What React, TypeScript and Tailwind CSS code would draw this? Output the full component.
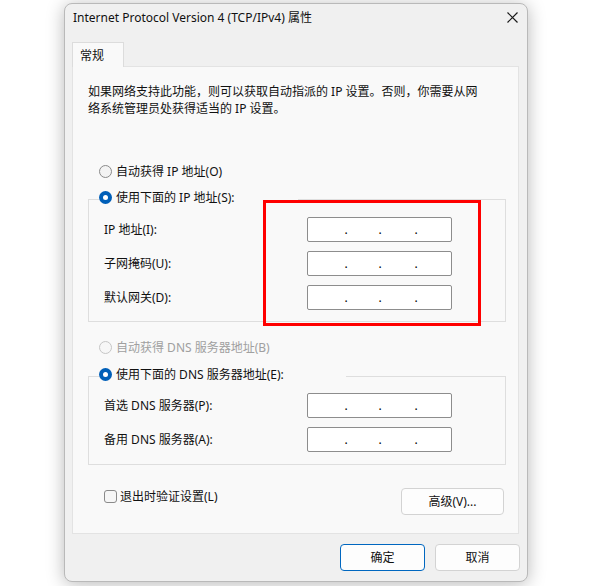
import React from "react";

const Radio = ({ checked, disabled }: { checked?: boolean; disabled?: boolean }) =>
  checked ? (
    <span className="flex h-[13px] w-[13px] shrink-0 items-center justify-center rounded-full bg-[#005fb8]">
      <span className="h-[5px] w-[5px] rounded-full bg-white" />
    </span>
  ) : disabled ? (
    <span className="h-[13px] w-[13px] shrink-0 rounded-full border border-[#c6c6c6] bg-[#f7f7f7]" />
  ) : (
    <span className="h-[13px] w-[13px] shrink-0 rounded-full border border-[#8a8a8a] bg-[#f3f3f3]" />
  );

const IpField = () => (
  <div className="flex h-[25px] w-[145px] items-center rounded-[2px] border border-[#8d8d8d] bg-white leading-[17px] text-black">
    <span className="w-[36px]" />
    <span className="w-[4px] text-center">.</span>
    <span className="w-[30px]" />
    <span className="w-[4px] text-center">.</span>
    <span className="w-[32px]" />
    <span className="w-[4px] text-center">.</span>
  </div>
);

const FieldRow = ({ label }: { label: string }) => (
  <div className="flex h-[25px] items-center">
    <span className="w-[203px]">{label}</span>
    <IpField />
  </div>
);

export default function App() {
  return (
    <div className="h-[586px] w-[600px] overflow-hidden bg-white pl-[64px] pt-[3px] font-['Noto_Sans','Noto_Sans_CJK_SC',sans-serif] text-[12px] leading-[17px] text-[#111111]">
      <div className="flex h-[579px] w-[464px] flex-col rounded-[8px] border border-[#b9b9b9] bg-[#f0f0f0] shadow-[0_2px_18px_rgba(0,0,0,0.28)]">
        {/* title bar */}
        <div className="flex h-[26px] items-center justify-between pl-[8px] pr-[9px]">
          <span>Internet Protocol Version 4 (TCP/IPv4) 属性</span>
          <svg width="11" height="11" viewBox="0 0 11 11" className="text-[#1a1a1a]">
            <path d="M0.5 0.5L10.5 10.5M10.5 0.5L0.5 10.5" stroke="currentColor" strokeWidth="1.2" fill="none" />
          </svg>
        </div>

        {/* tab header */}
        <div className="ml-[7px] mt-[12px] flex">
          <div className="relative z-10 -mb-px h-[25px] w-[52px] border-l border-r border-t border-[#dcdcdc] bg-[#f9f9f9] pl-[7px] pt-[4px]">
            常规
          </div>
        </div>

        {/* tab page */}
        <div className="relative ml-[7px] h-[468px] w-[447px] border border-[#e3e3e3] bg-[#f9f9f9] pl-[15px] pt-[16px]">
          <p className="leading-[17px]">
            如果网络支持此功能，则可以获取自动指派的 IP 设置。否则，你需要从网
            <br />
            络系统管理员处获得适当的 IP 设置。
          </p>

          <div className="ml-[11px] mt-[46px] flex h-[17px] items-center gap-[4px]">
            <Radio />
            <span>自动获得 IP 地址(O)</span>
          </div>

          <fieldset className="mt-[9px] w-[418px] border border-[#dedede] pb-[11px]">
            <legend className="ml-[10px] w-[199px] pb-[4px]">
              <div className="flex h-[17px] items-center gap-[4px]">
                <Radio checked />
                <span>使用下面的 IP 地址(S):</span>
              </div>
            </legend>
            <div className="flex flex-col gap-[9px] pl-[15px] pt-[7px]">
              <FieldRow label="IP 地址(I):" />
              <FieldRow label="子网掩码(U):" />
              <FieldRow label="默认网关(D):" />
            </div>
          </fieldset>

          <div className="ml-[11px] mt-[17px] flex h-[17px] items-center gap-[4px] text-[#a0a0a0]">
            <Radio disabled />
            <span>自动获得 DNS 服务器地址(B)</span>
          </div>

          <fieldset className="mt-[10px] w-[418px] border border-[#dedede] pb-[12px]">
            <legend className="ml-[10px] w-[247px] pb-[4px]">
              <div className="flex h-[17px] items-center gap-[4px]">
                <Radio checked />
                <span>使用下面的 DNS 服务器地址(E):</span>
              </div>
            </legend>
            <div className="flex flex-col gap-[9px] pl-[15px] pt-[6px]">
              <FieldRow label="首选 DNS 服务器(P):" />
              <FieldRow label="备用 DNS 服务器(A):" />
            </div>
          </fieldset>

          <div className="mt-[23px] flex w-[416px] items-start">
            <label className="ml-[16px] flex h-[17px] items-center gap-[3px]">
              <span className="h-[13px] w-[13px] rounded-[3px] border border-[#8a8a8a] bg-[#f6f6f6]" />
              <span>退出时验证设置(L)</span>
            </label>
            <button className="ml-auto h-[27px] w-[103px] rounded-[4px] border border-[#d3d3d3] bg-[#fdfdfd] text-[#111111]">
              高级(V)...
            </button>
          </div>

          {/* highlight frame around the address fields */}
          <div className="pointer-events-none absolute left-[190px] top-[133px] h-[126px] w-[218px] border-[3px] border-[#ff0000]" />
        </div>

        {/* dialog buttons */}
        <div className="mt-[10px] flex justify-end gap-[10px] pr-[7px]">
          <button className="h-[27px] w-[85px] rounded-[4px] border border-[#0067c0] bg-[#fdfdfd] text-[#111111]">
            确定
          </button>
          <button className="h-[27px] w-[85px] rounded-[4px] border border-[#d3d3d3] bg-[#fdfdfd] text-[#111111]">
            取消
          </button>
        </div>
      </div>
    </div>
  );
}
